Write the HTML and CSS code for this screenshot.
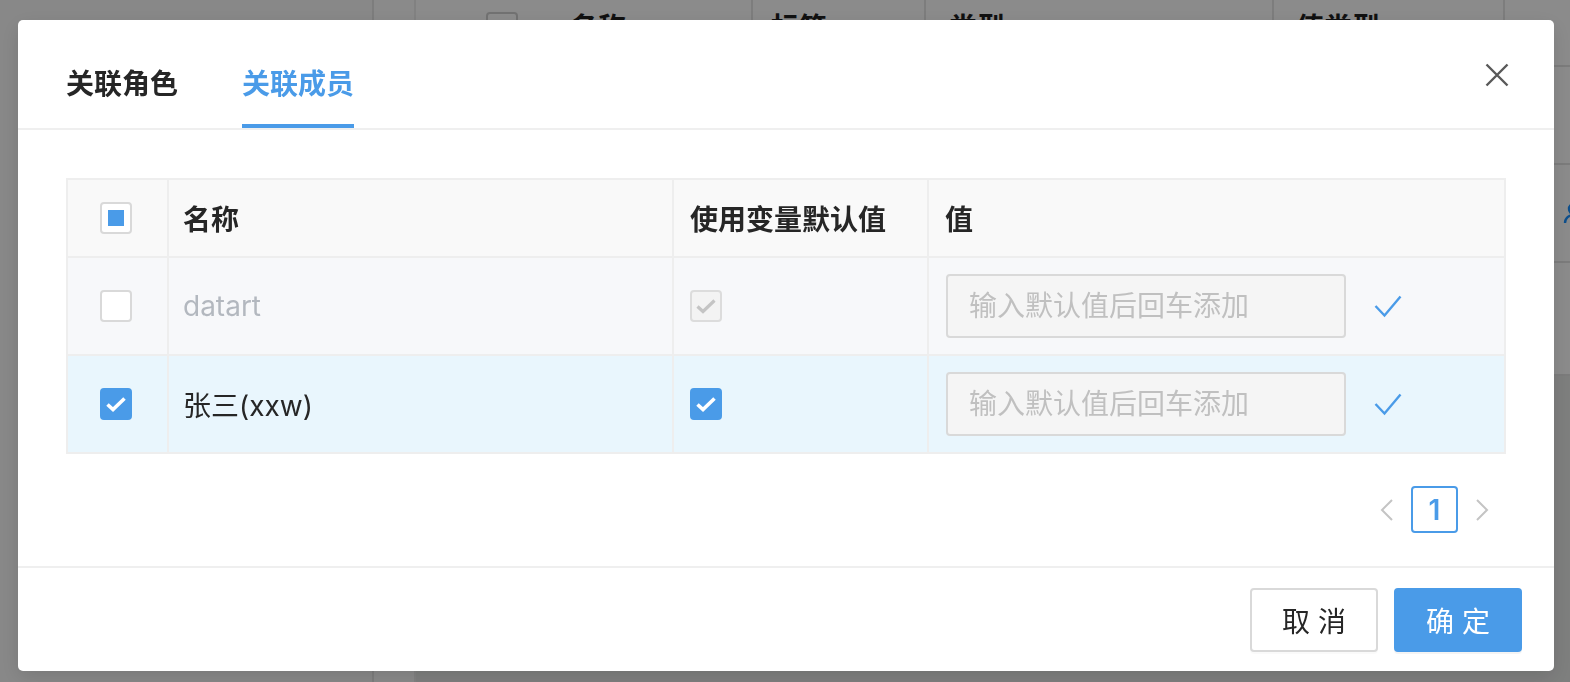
FILE: index.html
```html
<!DOCTYPE html>
<html lang="zh-CN">
<head>
<meta charset="utf-8">
<title>关联成员</title>
<link rel="stylesheet" href="styles.css">
</head>
<body>
<div class="app">
  <aside class="sidebar"></aside>
  <div class="strip"></div>
  <main class="main">
    <div class="bg-table">
      <div class="bg-row bg-head">
        <div class="bg-cell bg-spacer"></div>
        <div class="bg-cell bg-check"><span class="bg-box"></span></div>
        <div class="bg-cell bg-name">名称</div>
        <div class="bg-cell bg-tag">标签</div>
        <div class="bg-cell bg-type">类型</div>
        <div class="bg-cell bg-vtype">值类型</div>
        <div class="bg-cell bg-rest"></div>
      </div>
      <div class="bg-row"></div>
      <div class="bg-row bg-icon-row">
        <svg class="bg-user" width="24" height="24" viewBox="0 0 24 24"><circle cx="12" cy="8" r="5" fill="none" stroke="#1890ff" stroke-width="2.4"/><path d="M3 22c0-5 4-8 9-8s9 3 9 8" fill="none" stroke="#1890ff" stroke-width="2.4"/></svg>
      </div>
      <div class="bg-row bg-row-tall"></div>
    </div>
  </main>
</div>
<div class="mask"></div>
<div class="modal-wrap">
  <div class="modal">
    <div class="modal-header">
      <div class="tab">关联角色</div>
      <div class="tab tab-active">关联成员</div>
      <button class="close" aria-label="关闭">
        <svg width="24" height="24" viewBox="0 0 24 24"><path d="M1.5 1.5 22.5 22.5M22.5 1.5 1.5 22.5" stroke="#595959" stroke-width="2.4" fill="none"/></svg>
      </button>
    </div>
    <div class="modal-body">
      <div class="table">
        <div class="row row-head">
          <div class="cell cell-check"><span class="cb cb-indeterminate"></span></div>
          <div class="cell cell-name">名称</div>
          <div class="cell">使用变量默认值</div>
          <div class="cell">值</div>
        </div>
        <div class="row row-disabled">
          <div class="cell cell-check"><span class="cb"></span></div>
          <div class="cell cell-name cell-muted">datart</div>
          <div class="cell"><span class="cb cb-disabled-checked"><svg width="28" height="28" viewBox="0 0 28 28"><path d="M5.5 14.5 11 19.5 22.5 8.5" stroke="#c4c4c4" stroke-width="3.2" fill="none"/></svg></span></div>
          <div class="cell cell-value">
            <input class="value-input" type="text" placeholder="输入默认值后回车添加" disabled>
            <svg class="ok-icon" width="28" height="28" viewBox="0 0 28 28"><path d="M1.5 14 10.5 23.5 26.5 4.5" stroke="#4a9be8" stroke-width="2.4" fill="none"/></svg>
          </div>
        </div>
        <div class="row row-selected">
          <div class="cell cell-check"><span class="cb cb-checked"><svg width="28" height="28" viewBox="0 0 28 28"><path d="M5.5 14.5 11 19.5 22.5 8.5" stroke="#ffffff" stroke-width="3.6" fill="none"/></svg></span></div>
          <div class="cell cell-name">张三(xxw)</div>
          <div class="cell"><span class="cb cb-checked"><svg width="28" height="28" viewBox="0 0 28 28"><path d="M5.5 14.5 11 19.5 22.5 8.5" stroke="#ffffff" stroke-width="3.6" fill="none"/></svg></span></div>
          <div class="cell cell-value">
            <input class="value-input" type="text" placeholder="输入默认值后回车添加" disabled>
            <svg class="ok-icon" width="28" height="28" viewBox="0 0 28 28"><path d="M1.5 14 10.5 23.5 26.5 4.5" stroke="#4a9be8" stroke-width="2.4" fill="none"/></svg>
          </div>
        </div>
      </div>
      <div class="pagination">
        <span class="page-arrow"><svg width="16" height="24" viewBox="0 0 16 24"><path d="M13 2 3 12 13 22" stroke="#c4c4c4" stroke-width="2" fill="none"/></svg></span>
        <span class="page-item">1</span>
        <span class="page-arrow"><svg width="16" height="24" viewBox="0 0 16 24"><path d="M3 2 13 12 3 22" stroke="#c4c4c4" stroke-width="2" fill="none"/></svg></span>
      </div>
    </div>
    <div class="modal-footer">
      <button class="btn">取 消</button>
      <button class="btn btn-primary">确 定</button>
    </div>
  </div>
</div>
</body>
</html>
```
FILE: styles.css
```css
* { box-sizing: border-box; }
html, body { height: 100%; }
body {
  margin: 0;
  overflow: hidden;
  font-family: Inter, "Noto Sans CJK SC", sans-serif;
  color: #262626;
  background: #f0f0f0;
}

/* background page */
.app { display: flex; height: 100%; }
.sidebar { flex: none; width: 374px; background: #f7f7f7; border-right: 2px solid #e4e4e4; }
.strip { flex: none; width: 42px; background: #fbfbfb; border-right: 2px solid #ececec; }
.main { flex: 1; min-width: 0; overflow: hidden; background: #e6e7e6; }
.bg-table { background: #fdfdfd; }
.bg-row { height: 98px; border-bottom: 2px solid #e2e2e2; display: flex; }
.bg-head { height: 67px; }
.bg-row-tall { height: 113px; }
.bg-cell { flex: none; font-size: 28px; font-weight: 600; line-height: 32px; padding-top: 12px; color: #1f1f1f; }
.bg-spacer { width: 70px; }
.bg-check { width: 80px; }
.bg-box { display: block; width: 32px; height: 32px; border: 2px solid #d0d0d0; border-radius: 4px; background: #fff; }
.bg-name { width: 185px; padding-left: 4px; }
.bg-tag { width: 173px; padding-left: 18px; border-left: 2px solid #e4e4e4; }
.bg-type { width: 348px; padding-left: 23px; border-left: 2px solid #e4e4e4; }
.bg-vtype { width: 231px; padding-left: 22px; border-left: 2px solid #e4e4e4; }
.bg-rest { flex: 1; border-left: 2px solid #e4e4e4; }
.bg-icon-row { align-items: center; padding-left: 1146px; }
.bg-user { flex: none; }

.mask { position: fixed; inset: 0; background: rgba(0, 0, 0, 0.45); }

/* modal */
.modal-wrap {
  position: fixed;
  inset: 0;
  display: flex;
  justify-content: flex-start;
  align-items: flex-start;
  padding: 20px 0 0 18px;
}
.modal {
  width: 1536px;
  background: #fff;
  border-radius: 5px;
  box-shadow: 0 6px 20px rgba(0, 0, 0, 0.12);
}
.modal-header {
  height: 110px;
  display: flex;
  gap: 64px;
  padding: 0 45px 0 48px;
  border-bottom: 2px solid #efefef;
}
.tab {
  height: 108px;
  font-size: 28px;
  font-weight: 600;
  line-height: 40px;
  padding-top: 44px;
  color: #262626;
  border-bottom: 4px solid transparent;
}
.tab-active { color: #4a9be8; border-bottom-color: #4a9be8; }
.close {
  margin-left: auto;
  align-self: center;
  margin-top: 2px;
  padding: 0;
  border: 0;
  background: none;
  width: 24px;
  height: 24px;
  display: flex;
}

.modal-body { padding: 48px 48px 32px; }
.table { border: 2px solid #eeeeee; border-bottom: 0; }
.row {
  display: grid;
  grid-template-columns: 99px 505px 255px 1fr;
  height: 98px;
  border-bottom: 2px solid #eeeeee;
  background: #fff;
}
.row-head { height: 78px; background: #f9f9f9; font-weight: 600; }
.row-disabled { background: #f7f8fa; }
.row-selected { background: #e9f6fd; }
.cell {
  display: flex;
  align-items: center;
  padding: 0 16px;
  font-size: 28px;
  border-left: 2px solid #eeeeee;
}
.cell-check { border-left: 0; padding: 0 0 0 32px; }
.cell-name { padding-left: 14px; }
.cell-muted { color: #b3b8bf; }
.cell-value { gap: 28px; padding-left: 17px; }

.cb {
  width: 32px;
  height: 32px;
  border: 2px solid #d9d9d9;
  border-radius: 4px;
  background: #fff;
  display: flex;
  align-items: center;
  justify-content: center;
}
.cb-indeterminate::after {
  content: "";
  width: 16px;
  height: 16px;
  background: #4a9be8;
}
.cb-checked { background: #4a9be8; border-color: #4a9be8; }
.cb-disabled-checked { background: #f3f3f3; border-color: #dcdcdc; }

.value-input {
  width: 400px;
  height: 64px;
  padding: 0 21px;
  font-family: inherit;
  font-size: 28px;
  background: #f5f5f5;
  border: 2px solid #d9d9d9;
  border-radius: 4px;
  color: #bfbfbf;
}
.value-input::placeholder { color: #c0c0c0; }
.ok-icon { flex: none; }

.pagination {
  display: flex;
  justify-content: flex-end;
  margin-top: 32px;
  height: 48px;
}
.page-arrow {
  width: 48px;
  height: 48px;
  display: flex;
  align-items: center;
  justify-content: center;
}
.page-item {
  width: 47px;
  height: 47px;
  border: 2px solid #4a9be8;
  border-radius: 4px;
  color: #4a9be8;
  font-size: 28px;
  font-weight: 600;
  display: flex;
  align-items: center;
  justify-content: center;
}

.modal-footer {
  display: flex;
  justify-content: flex-end;
  gap: 16px;
  padding: 20px 32px 19px;
  border-top: 2px solid #efefef;
}
.btn {
  width: 128px;
  height: 64px;
  font-family: inherit;
  font-size: 28px;
  color: #262626;
  background: #fff;
  border: 2px solid #d9d9d9;
  border-radius: 4px;
  box-shadow: 0 2px 0 rgba(0, 0, 0, 0.02);
}
.btn-primary {
  color: #fff;
  background: #4a9be8;
  border-color: #4a9be8;
  box-shadow: 0 2px 0 rgba(0, 0, 0, 0.045);
}
```
